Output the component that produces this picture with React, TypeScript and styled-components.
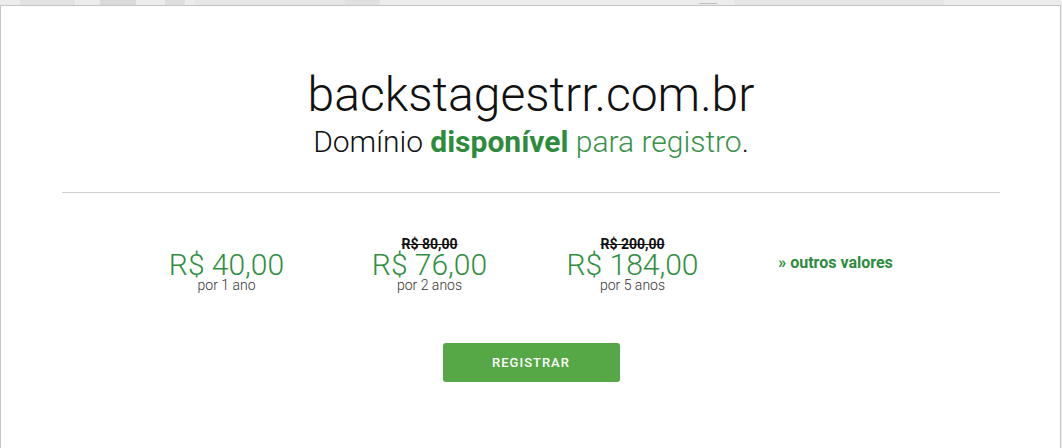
import React from "react";
import styled, { createGlobalStyle } from "styled-components";

const Global = createGlobalStyle`
  html, body { margin: 0; padding: 0; }
  body {
    background: #ededed;
    font-family: Roboto, "Liberation Sans", Arial, sans-serif;
    height: 448px;
    overflow: hidden;
  }
`;

const Page = styled.div`
  display: flex;
  flex-direction: column;
  height: 448px;
  padding-right: 1px;
  box-sizing: border-box;
`;

const Backdrop = styled.svg`
  display: block;
  width: 100%;
  height: 5px;
  flex: none;
`;

const Card = styled.main`
  flex: 1;
  background: #fff;
  border: 1px solid #c4c4c4;
  border-bottom: none;
  padding: 61px 60px 0 61px;
  display: flex;
  flex-direction: column;
  align-items: center;
`;

const Domain = styled.h1`
  margin: 0;
  font-weight: 300;
  font-size: 48px;
  line-height: 56px;
  color: #111;
`;

const Status = styled.p`
  margin: 2px 0 0;
  font-weight: 300;
  font-size: 30px;
  line-height: 34px;
  color: #111;
`;

const Strong = styled.strong`
  font-weight: 700;
  color: #2e8b3e;
`;

const Soft = styled.span`
  color: #38924a;
`;

const Divider = styled.hr`
  align-self: stretch;
  margin: 33px 0 0;
  border: none;
  border-top: 1px solid #cfcfcf;
`;

const Prices = styled.div`
  display: grid;
  grid-template-columns: repeat(4, 203px);
  align-items: end;
  margin-top: 44px;
`;

const Offer = styled.div`
  display: flex;
  flex-direction: column;
  align-items: center;
`;

const OldPrice = styled.s<{ $hidden?: boolean }>`
  font-size: 14px;
  font-weight: 700;
  line-height: 14px;
  color: #111;
  visibility: ${(p) => (p.$hidden ? "hidden" : "visible")};
`;

const Price = styled.span`
  font-size: 30px;
  font-weight: 300;
  line-height: 27px;
  color: #2f8f3f;
`;

const Period = styled.span`
  font-size: 14px;
  font-weight: 300;
  line-height: 14px;
  color: #333;
`;

const More = styled.a`
  align-self: center;
  justify-self: center;
  font-size: 16px;
  font-weight: 700;
  color: #2e8b3e;
  text-decoration: none;
  margin-bottom: 4px;
`;

const Register = styled.button`
  margin-top: 51px;
  width: 177px;
  height: 39px;
  border: none;
  border-radius: 3px;
  background: #55a845;
  color: #fff;
  font-family: Roboto, "Liberation Sans", Arial, sans-serif;
  font-size: 13px;
  font-weight: 500;
  letter-spacing: 1px;
  cursor: pointer;
`;

const offers = [
  { old: null, price: "R$ 40,00", period: "por 1 ano" },
  { old: "R$ 80,00", price: "R$ 76,00", period: "por 2 anos" },
  { old: "R$ 200,00", price: "R$ 184,00", period: "por 5 anos" },
];

export default function App() {
  return (
    <>
      <Global />
      <Page>
        <Backdrop viewBox="0 0 1062 5" preserveAspectRatio="none">
          <rect x="0" y="0" width="1062" height="5" fill="#ececec" />
          <rect x="20" y="0" width="55" height="5" fill="#e2e2e2" />
          <rect x="100" y="0" width="36" height="5" fill="#dadada" />
          <rect x="165" y="0" width="20" height="5" fill="#dedede" />
          <rect x="195" y="0" width="160" height="5" fill="#e6e6e6" />
          <rect x="345" y="0" width="35" height="5" fill="#e0e0e0" />
          <rect x="700" y="3" width="18" height="1" fill="#bdbdbd" />
          <rect x="735" y="0" width="210" height="5" fill="#e4e4e4" />
        </Backdrop>
        <Card>
          <Domain>backstagestrr.com.br</Domain>
          <Status>
            Domínio <Strong>disponível</Strong> <Soft>para registro</Soft>.
          </Status>
          <Divider />
          <Prices>
            {offers.map((o) => (
              <Offer key={o.price}>
                <OldPrice $hidden={!o.old}>{o.old ?? "R$ 0,00"}</OldPrice>
                <Price>{o.price}</Price>
                <Period>{o.period}</Period>
              </Offer>
            ))}
            <More href="#">» outros valores</More>
          </Prices>
          <Register>REGISTRAR</Register>
        </Card>
      </Page>
    </>
  );
}
